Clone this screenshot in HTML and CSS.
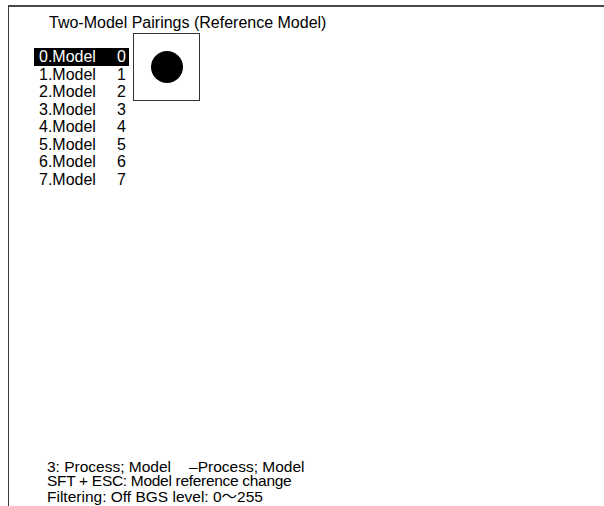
FILE: index.html
```html
<!DOCTYPE html>
<html>
<head>
<meta charset="utf-8">
<link rel="stylesheet" href="styles.css">
</head>
<body>
<div class="frame">
  <div class="title">Two-Model Pairings (Reference Model)</div>
  <div class="main">
    <div class="list">
      <div class="row selected"><span class="label">0.Model</span><span class="num">0</span></div>
      <div class="row"><span class="label">1.Model</span><span class="num">1</span></div>
      <div class="row"><span class="label">2.Model</span><span class="num">2</span></div>
      <div class="row"><span class="label">3.Model</span><span class="num">3</span></div>
      <div class="row"><span class="label">4.Model</span><span class="num">4</span></div>
      <div class="row"><span class="label">5.Model</span><span class="num">5</span></div>
      <div class="row"><span class="label">6.Model</span><span class="num">6</span></div>
      <div class="row"><span class="label">7.Model</span><span class="num">7</span></div>
    </div>
    <div class="preview"><div class="dot"></div></div>
  </div>
  <div class="footer">
    <div class="line">3: Process; Model<span class="gap"></span>–Process; Model</div>
    <div class="line tight">SFT + ESC: Model reference change</div>
    <div class="line">Filtering: Off BGS level: 0<span class="wave">〜</span>255</div>
  </div>
</div>
</body>
</html>
```
FILE: styles.css
```css
html, body {
  margin: 0;
  padding: 0;
  background: #fff;
  height: 100%;
}
body {
  font-family: "Liberation Sans", Arial, sans-serif;
  font-size: 16px;
  color: #000;
}
.frame {
  box-sizing: border-box;
  margin: 5px 0 0 8px;
  height: calc(100% - 5px);
  border-top: 2px solid #4a4a4a;
  border-left: 1.5px solid #3a3a3a;
  display: flex;
  flex-direction: column;
}
.title {
  padding: 7px 0 0 40px;
  line-height: 18px;
}
.main {
  display: flex;
  align-items: flex-start;
  margin-top: 1px;
}
.list {
  margin: 15px 0 0 25px;
  width: 95px;
}
.row {
  display: flex;
  height: 17.5px;
  line-height: 17.5px;
  padding: 0 3px 0 5px;
}
.row.selected {
  background: #000;
  color: #fff;
}
.label {
  width: 78px;
}
.num {
  width: 9px;
}
.preview {
  box-sizing: border-box;
  width: 67px;
  height: 68px;
  margin-left: 4px;
  border: 1px solid #333;
  display: flex;
  align-items: center;
  justify-content: center;
}
.dot {
  width: 32px;
  height: 32px;
  border-radius: 50%;
  background: #000;
}
.footer {
  margin-top: auto;
  padding: 0 0 2px 38px;
  font-size: 15.5px;
}
.line {
  line-height: 14px;
  white-space: nowrap;
}
.line.tight {
  letter-spacing: -0.3px;
}
.gap {
  display: inline-block;
  width: 18px;
}
.wave {
  font-family: "Noto Sans CJK JP", sans-serif;
}
```
